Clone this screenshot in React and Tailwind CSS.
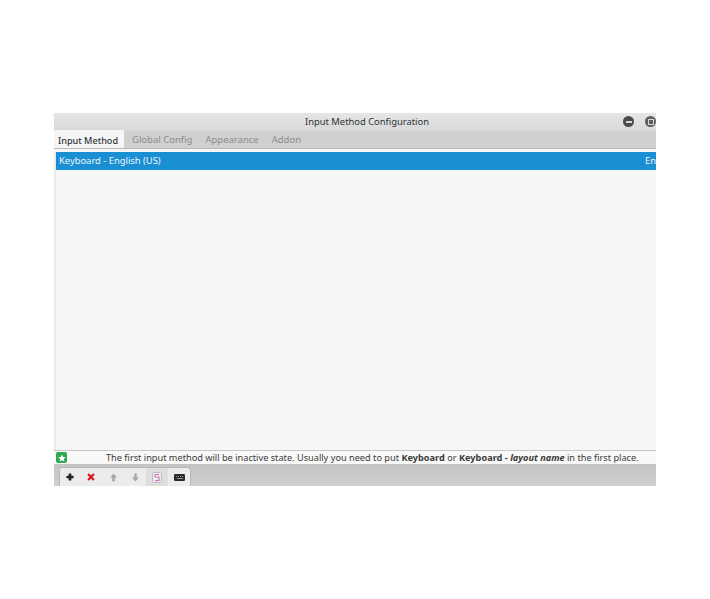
import React from "react";

const Arrow = ({ down }) => (
  <svg width="9" height="9" viewBox="0 0 9 9" className={down ? "rotate-180" : ""}>
    <path d="M4.5 0.5 L8 4.6 H5.8 V8.5 H3.2 V4.6 H1 Z" fill="#a8a8a8" />
  </svg>
);

const Toolbar = () => (
  <div className="ml-[5px] flex h-[19px] w-[132px] items-center rounded-t-[3px] border border-b-0 border-[#b8b8b8] bg-[#ececec]">
    <div className="flex w-[21px] justify-center">
      <svg width="8" height="8" viewBox="0 0 9 9"><path d="M3 0.5 H6 V3 H8.5 V6 H6 V8.5 H3 V6 H0.5 V3 H3 Z" fill="#222" /></svg>
    </div>
    <div className="flex w-[21px] justify-center">
      <svg width="8" height="8" viewBox="0 0 9 9"><path d="M1.2 1.2 L7.8 7.8 M7.8 1.2 L1.2 7.8" stroke="#d8141c" strokeWidth="2.4" /></svg>
    </div>
    <div className="flex w-[23px] justify-center"><Arrow /></div>
    <div className="flex w-[22px] justify-center"><Arrow down /></div>
    <div className="flex h-[18px] w-[22px] items-center justify-center bg-[#dedede]">
      <svg width="10" height="11" viewBox="0 0 10 11">
        <rect x="0.5" y="0.5" width="9" height="10" rx="1" fill="#ededed" stroke="#bcbcbc" />
        <path d="M7 2.5 H3 V5 H7 V8.5 H3" fill="none" stroke="#d070c0" strokeWidth="1.1" />
      </svg>
    </div>
    <div className="flex w-[22px] justify-center">
      <svg width="11" height="7" viewBox="0 0 11 7">
        <rect width="11" height="7" rx="1.2" fill="#2a2a2a" />
        <path d="M2 2.5 H3 M4 2.5 H5 M6 2.5 H7 M8 2.5 H9 M3 4.5 H9" stroke="#b0b0b0" strokeWidth="0.8" />
      </svg>
    </div>
  </div>
);

const App = () => {
  return (
    <div className="h-[599px] w-[710px] bg-white pl-[54px] pt-[113px] font-['Noto_Sans','Open_Sans',sans-serif] text-[9.4px] text-[#3a3a3a]">
      <div className="flex h-[373px] w-[602px] flex-col overflow-hidden bg-[#f6f6f6]">
        {/* title bar */}
        <div className="flex h-[18px] items-center bg-gradient-to-b from-[#e6e6e6] to-[#d8d8d8]">
          <div className="flex-1 pl-[251px] text-[#2e3436]">Input Method Configuration</div>
          <div className="flex w-[33px] items-center gap-[11px] overflow-hidden pb-[1px]">
            <div className="flex h-[11px] w-[11px] shrink-0 items-center justify-center rounded-full bg-[#4a4a4a]">
              <div className="h-[2px] w-[6px] bg-[#d8d8d8]" />
            </div>
            <div className="flex h-[11px] w-[11px] shrink-0 items-center justify-center rounded-full bg-[#5e5e5e]">
              <div className="h-[6px] w-[6px] border border-[#d8d8d8]" />
            </div>
          </div>
        </div>

        {/* tabs */}
        <div className="flex h-[18px] items-end border-b border-[#b9b9b9] bg-[#d0d0d0]">
          <div className="flex h-[18px] w-[70px] items-center bg-[#f6f6f6] pl-[4px] pt-[3px] text-[9.1px] font-medium text-[#2e3436]">Input Method</div>
          <div className="flex h-[18px] items-center gap-[13px] pl-[8px] pt-[3px] text-[9.5px] text-[#8c8c8c]">
            <span>Global Config</span>
            <span>Appearance</span>
            <span>Addon</span>
          </div>
        </div>

        {/* list */}
        <div className="flex-1 pt-[3px]">
          <div className="flex h-full flex-col border-l-2 border-[#e8e8e8]">
            <div className="flex h-[18px] items-center justify-between whitespace-nowrap bg-[#1a8fd3] pl-[3px] text-[#f0f6fb]">
              <span>Keyboard - English (US)</span>
              <span className="w-[11px] overflow-hidden">En</span>
            </div>
          </div>
        </div>

        {/* hint */}
        <div className="flex h-[14px] items-center border-t border-[#c8c8c8] bg-[#f8f8f8] pl-[2px]">
          <div className="flex h-[11px] w-[11px] shrink-0 items-center justify-center rounded-[2px] bg-[#2fa84f]">
            <svg width="8" height="8" viewBox="0 0 10 10"><path d="M5 0.5 L6.4 3.6 L9.7 4 L7.2 6.2 L7.9 9.5 L5 7.8 L2.1 9.5 L2.8 6.2 L0.3 4 L3.6 3.6 Z" fill="#fff" /></svg>
          </div>
          <div className="ml-[39px] whitespace-nowrap pt-[1px] text-[9.2px]">
            The first input method will be inactive state. Usually you need to put <b className="font-bold">Keyboard</b> or <b className="font-bold">Keyboard - <i>layout name</i></b> in the first place.
          </div>
        </div>

        {/* bottom */}
        <div className="flex h-[22px] items-end bg-gradient-to-b from-[#c4c4c4] to-[#d0d0d0]">
          <Toolbar />
        </div>
      </div>
    </div>
  );
};

export default App;
